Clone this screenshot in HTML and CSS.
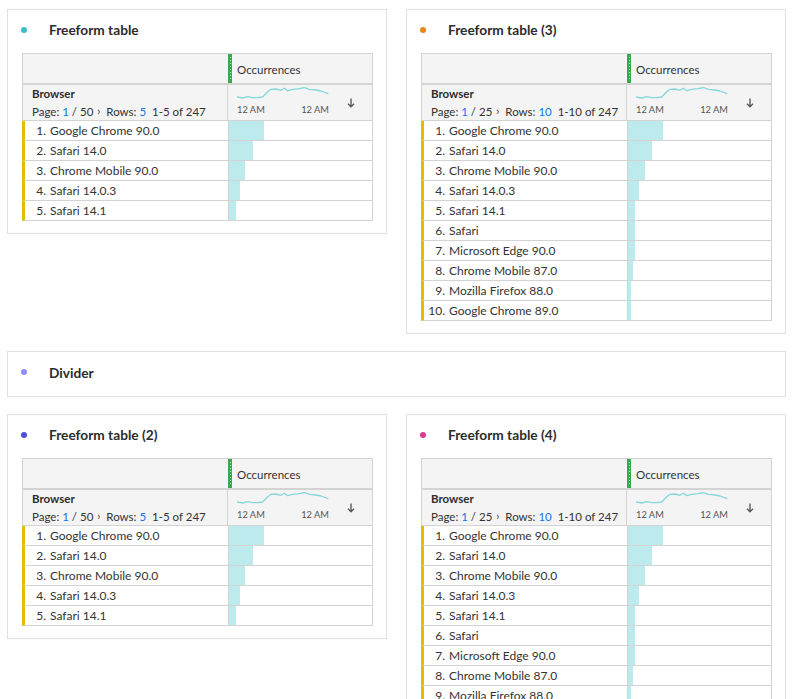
FILE: index.html
```html
<!DOCTYPE html>
<html>
<head>
<meta charset="utf-8">
<link rel="stylesheet" href="styles.css">
</head>
<body>
<div class="board">

  <section class="panel">
    <header class="ph"><span class="dot dot-teal"></span><span class="pt">Freeform table</span></header>
    <div class="ft">
      <div class="h1"><div class="c1"></div><div class="c2"><span class="grip"><span class="grip-dots"></span></span><span class="metric">Occurrences</span></div></div>
      <div class="h2">
        <div class="c1"><div class="dim">Browser</div><div class="pager">Page: <span class="blue">1</span> / 50 <span class="chev">›</span> Rows: <span class="blue">5</span> <span class="range">1-5 of 247</span></div></div>
        <div class="c2">
          <div class="spark">
            <svg class="spark-svg" width="92" height="12" viewBox="0 0 92 12"><polyline points="0,10 5.7,11 10.7,9.7 15.7,10.7 20.7,10.7 25.7,10 30.7,4.7 34,2.3 39,2 44,3.3 47.3,1.3 50.7,3.7 55.7,2.3 62.3,1.7 67.3,0.5 72.3,2.3 79,3 84,4 91.3,6.7" fill="none" stroke="#86d7dc" stroke-width="1.3" stroke-linejoin="round"/></svg>
            <div class="axis"><span>12 AM</span><span>12 AM</span></div>
          </div>
          <svg class="sort" width="8" height="10" viewBox="0 0 8 10"><path d="M4 0.5V8.5M1 5.8L4 8.8L7 5.8" fill="none" stroke="#5a5a5a" stroke-width="1.4"/></svg>
        </div>
      </div>
      <div class="row"><div class="c1"><span class="num">1.</span>Google Chrome 90.0</div><div class="c2"><span class="bar" style="width:35px"></span></div></div>
      <div class="row"><div class="c1"><span class="num">2.</span>Safari 14.0</div><div class="c2"><span class="bar" style="width:24px"></span></div></div>
      <div class="row"><div class="c1"><span class="num">3.</span>Chrome Mobile 90.0</div><div class="c2"><span class="bar" style="width:16px"></span></div></div>
      <div class="row"><div class="c1"><span class="num">4.</span>Safari 14.0.3</div><div class="c2"><span class="bar" style="width:11px"></span></div></div>
      <div class="row"><div class="c1"><span class="num">5.</span>Safari 14.1</div><div class="c2"><span class="bar" style="width:7px"></span></div></div>
    </div>
  </section>

  <section class="panel">
    <header class="ph"><span class="dot dot-orange"></span><span class="pt">Freeform table (3)</span></header>
    <div class="ft">
      <div class="h1"><div class="c1"></div><div class="c2"><span class="grip"><span class="grip-dots"></span></span><span class="metric">Occurrences</span></div></div>
      <div class="h2">
        <div class="c1"><div class="dim">Browser</div><div class="pager">Page: <span class="blue">1</span> / 25 <span class="chev">›</span> Rows: <span class="blue">10</span> <span class="range">1-10 of 247</span></div></div>
        <div class="c2">
          <div class="spark">
            <svg class="spark-svg" width="92" height="12" viewBox="0 0 92 12"><polyline points="0,10 5.7,11 10.7,9.7 15.7,10.7 20.7,10.7 25.7,10 30.7,4.7 34,2.3 39,2 44,3.3 47.3,1.3 50.7,3.7 55.7,2.3 62.3,1.7 67.3,0.5 72.3,2.3 79,3 84,4 91.3,6.7" fill="none" stroke="#86d7dc" stroke-width="1.3" stroke-linejoin="round"/></svg>
            <div class="axis"><span>12 AM</span><span>12 AM</span></div>
          </div>
          <svg class="sort" width="8" height="10" viewBox="0 0 8 10"><path d="M4 0.5V8.5M1 5.8L4 8.8L7 5.8" fill="none" stroke="#5a5a5a" stroke-width="1.4"/></svg>
        </div>
      </div>
      <div class="row"><div class="c1"><span class="num">1.</span>Google Chrome 90.0</div><div class="c2"><span class="bar" style="width:35px"></span></div></div>
      <div class="row"><div class="c1"><span class="num">2.</span>Safari 14.0</div><div class="c2"><span class="bar" style="width:24px"></span></div></div>
      <div class="row"><div class="c1"><span class="num">3.</span>Chrome Mobile 90.0</div><div class="c2"><span class="bar" style="width:17px"></span></div></div>
      <div class="row"><div class="c1"><span class="num">4.</span>Safari 14.0.3</div><div class="c2"><span class="bar" style="width:11px"></span></div></div>
      <div class="row"><div class="c1"><span class="num">5.</span>Safari 14.1</div><div class="c2"><span class="bar" style="width:7px"></span></div></div>
      <div class="row"><div class="c1"><span class="num">6.</span>Safari</div><div class="c2"><span class="bar" style="width:7px"></span></div></div>
      <div class="row"><div class="c1"><span class="num">7.</span>Microsoft Edge 90.0</div><div class="c2"><span class="bar" style="width:7px"></span></div></div>
      <div class="row"><div class="c1"><span class="num">8.</span>Chrome Mobile 87.0</div><div class="c2"><span class="bar" style="width:5px"></span></div></div>
      <div class="row"><div class="c1"><span class="num">9.</span>Mozilla Firefox 88.0</div><div class="c2"><span class="bar" style="width:3px"></span></div></div>
      <div class="row"><div class="c1"><span class="num">10.</span>Google Chrome 89.0</div><div class="c2"><span class="bar" style="width:3px"></span></div></div>
    </div>
  </section>

  <section class="panel divider">
    <header class="ph"><span class="dot dot-lavender"></span><span class="pt">Divider</span></header>
  </section>

  <section class="panel">
    <header class="ph"><span class="dot dot-indigo"></span><span class="pt">Freeform table (2)</span></header>
    <div class="ft">
      <div class="h1"><div class="c1"></div><div class="c2"><span class="grip"><span class="grip-dots"></span></span><span class="metric">Occurrences</span></div></div>
      <div class="h2">
        <div class="c1"><div class="dim">Browser</div><div class="pager">Page: <span class="blue">1</span> / 50 <span class="chev">›</span> Rows: <span class="blue">5</span> <span class="range">1-5 of 247</span></div></div>
        <div class="c2">
          <div class="spark">
            <svg class="spark-svg" width="92" height="12" viewBox="0 0 92 12"><polyline points="0,10 5.7,11 10.7,9.7 15.7,10.7 20.7,10.7 25.7,10 30.7,4.7 34,2.3 39,2 44,3.3 47.3,1.3 50.7,3.7 55.7,2.3 62.3,1.7 67.3,0.5 72.3,2.3 79,3 84,4 91.3,6.7" fill="none" stroke="#86d7dc" stroke-width="1.3" stroke-linejoin="round"/></svg>
            <div class="axis"><span>12 AM</span><span>12 AM</span></div>
          </div>
          <svg class="sort" width="8" height="10" viewBox="0 0 8 10"><path d="M4 0.5V8.5M1 5.8L4 8.8L7 5.8" fill="none" stroke="#5a5a5a" stroke-width="1.4"/></svg>
        </div>
      </div>
      <div class="row"><div class="c1"><span class="num">1.</span>Google Chrome 90.0</div><div class="c2"><span class="bar" style="width:35px"></span></div></div>
      <div class="row"><div class="c1"><span class="num">2.</span>Safari 14.0</div><div class="c2"><span class="bar" style="width:24px"></span></div></div>
      <div class="row"><div class="c1"><span class="num">3.</span>Chrome Mobile 90.0</div><div class="c2"><span class="bar" style="width:16px"></span></div></div>
      <div class="row"><div class="c1"><span class="num">4.</span>Safari 14.0.3</div><div class="c2"><span class="bar" style="width:11px"></span></div></div>
      <div class="row"><div class="c1"><span class="num">5.</span>Safari 14.1</div><div class="c2"><span class="bar" style="width:7px"></span></div></div>
    </div>
  </section>

  <section class="panel">
    <header class="ph"><span class="dot dot-pink"></span><span class="pt">Freeform table (4)</span></header>
    <div class="ft">
      <div class="h1"><div class="c1"></div><div class="c2"><span class="grip"><span class="grip-dots"></span></span><span class="metric">Occurrences</span></div></div>
      <div class="h2">
        <div class="c1"><div class="dim">Browser</div><div class="pager">Page: <span class="blue">1</span> / 25 <span class="chev">›</span> Rows: <span class="blue">10</span> <span class="range">1-10 of 247</span></div></div>
        <div class="c2">
          <div class="spark">
            <svg class="spark-svg" width="92" height="12" viewBox="0 0 92 12"><polyline points="0,10 5.7,11 10.7,9.7 15.7,10.7 20.7,10.7 25.7,10 30.7,4.7 34,2.3 39,2 44,3.3 47.3,1.3 50.7,3.7 55.7,2.3 62.3,1.7 67.3,0.5 72.3,2.3 79,3 84,4 91.3,6.7" fill="none" stroke="#86d7dc" stroke-width="1.3" stroke-linejoin="round"/></svg>
            <div class="axis"><span>12 AM</span><span>12 AM</span></div>
          </div>
          <svg class="sort" width="8" height="10" viewBox="0 0 8 10"><path d="M4 0.5V8.5M1 5.8L4 8.8L7 5.8" fill="none" stroke="#5a5a5a" stroke-width="1.4"/></svg>
        </div>
      </div>
      <div class="row"><div class="c1"><span class="num">1.</span>Google Chrome 90.0</div><div class="c2"><span class="bar" style="width:35px"></span></div></div>
      <div class="row"><div class="c1"><span class="num">2.</span>Safari 14.0</div><div class="c2"><span class="bar" style="width:24px"></span></div></div>
      <div class="row"><div class="c1"><span class="num">3.</span>Chrome Mobile 90.0</div><div class="c2"><span class="bar" style="width:17px"></span></div></div>
      <div class="row"><div class="c1"><span class="num">4.</span>Safari 14.0.3</div><div class="c2"><span class="bar" style="width:11px"></span></div></div>
      <div class="row"><div class="c1"><span class="num">5.</span>Safari 14.1</div><div class="c2"><span class="bar" style="width:7px"></span></div></div>
      <div class="row"><div class="c1"><span class="num">6.</span>Safari</div><div class="c2"><span class="bar" style="width:7px"></span></div></div>
      <div class="row"><div class="c1"><span class="num">7.</span>Microsoft Edge 90.0</div><div class="c2"><span class="bar" style="width:7px"></span></div></div>
      <div class="row"><div class="c1"><span class="num">8.</span>Chrome Mobile 87.0</div><div class="c2"><span class="bar" style="width:5px"></span></div></div>
      <div class="row"><div class="c1"><span class="num">9.</span>Mozilla Firefox 88.0</div><div class="c2"><span class="bar" style="width:3px"></span></div></div>
      <div class="row"><div class="c1"><span class="num">10.</span>Google Chrome 89.0</div><div class="c2"><span class="bar" style="width:3px"></span></div></div>
    </div>
  </section>

</div>
</body>
</html>
```

FILE: styles.css
```css
html { overflow: hidden; }
body {
  margin: 0;
  padding: 9px 0 0 7px;
  background: #ffffff;
  font-family: "Lato", "Liberation Sans", sans-serif;
  color: #2c2c2c;
}
.board {
  display: grid;
  grid-template-columns: 380px 380px;
  column-gap: 19px;
  row-gap: 17px;
  align-items: start;
}
.panel {
  border: 1px solid #e1e1e1;
  padding: 0 14px 12px 14px;
  background: #fff;
}
.divider {
  grid-column: 1 / span 2;
  padding-bottom: 0;
}
.ph {
  height: 43px;
  display: flex;
  align-items: center;
}
.divider .ph { height: 44px; }
.dot {
  width: 6px;
  height: 6px;
  border-radius: 50%;
  margin-left: -1px;
  margin-top: -4px;
}
.dot-teal { background: #3fc0c9; }
.dot-orange { background: #e68619; }
.dot-lavender { background: #8e8ef5; }
.dot-indigo { background: #4f4fd4; }
.dot-pink { background: #db3a95; }
.pt {
  margin-left: 22px;
  font-size: 13.7px;
  font-weight: 700;
  color: #2c2c2c;
  margin-top: -4px;
}

.ft {
  width: 350px;
  border-top: 1px solid #d3d3d3;
  border-right: 1px solid #d3d3d3;
  font-size: 12px;
}
.h1 {
  display: flex;
  height: 29px;
  background: #f4f4f4;
  border-left: 1px solid #d3d3d3;
  border-bottom: 2px solid #d3d3d3;
}
.h1 .c1 { width: 205px; }
.h1 .c2 {
  flex: 1;
  display: flex;
  align-items: center;
}
.grip {
  width: 4px;
  height: 29px;
  background: #3aa84f;
  display: flex;
  justify-content: center;
  align-items: center;
}
.grip-dots {
  width: 1px;
  height: 24px;
  background: repeating-linear-gradient(to bottom, rgba(255,255,255,0.75) 0 1px, transparent 1px 3px);
}
.metric {
  margin-left: 5px;
  font-size: 11.5px;
  color: #333;
  margin-top: 1px;
}
.h2 {
  display: flex;
  height: 35px;
  background: #f4f4f4;
  border-left: 1px solid #d3d3d3;
  border-bottom: 1px solid #d3d3d3;
}
.h2 .c1 {
  width: 205px;
  border-right: 1px solid #d3d3d3;
  padding: 2px 0 0 9px;
  box-sizing: border-box;
}
.dim {
  font-weight: 700;
  font-size: 11.5px;
  line-height: 14px;
  color: #2c2c2c;
}
.pager {
  margin-top: 4px;
  font-size: 11.5px;
  line-height: 14px;
  color: #333;
  white-space: nowrap;
}
.blue { color: #1473e6; }
.chev { font-size: 11px; margin: 0 3px 0 1px; position: relative; top: -1px; }
.range { margin-left: 3px; }
.h2 .c2 {
  flex: 1;
  display: flex;
  align-items: flex-start;
  padding: 2px 0 0 9px;
}
.spark { width: 92px; }
.spark-svg { display: block; }
.axis {
  display: flex;
  justify-content: space-between;
  margin-top: 5px;
  font-size: 9.3px;
  line-height: 12px;
  color: #555;
}
.sort {
  margin: 11px 17px 0 auto;
}
.row {
  display: flex;
  height: 19px;
  border-left: 3px solid #e5bd00;
  border-bottom: 1px solid #d3d3d3;
  background: #fff;
}
.row .c1 {
  width: 203px;
  border-right: 1px solid #d3d3d3;
  display: flex;
  align-items: center;
  white-space: nowrap;
  color: #333;
}
.num {
  width: 21px;
  text-align: right;
  margin-right: 4px;
}
.row .c2 { flex: 1; display: flex; }
.bar {
  display: block;
  height: 19px;
  background: #bdeaed;
}
```
